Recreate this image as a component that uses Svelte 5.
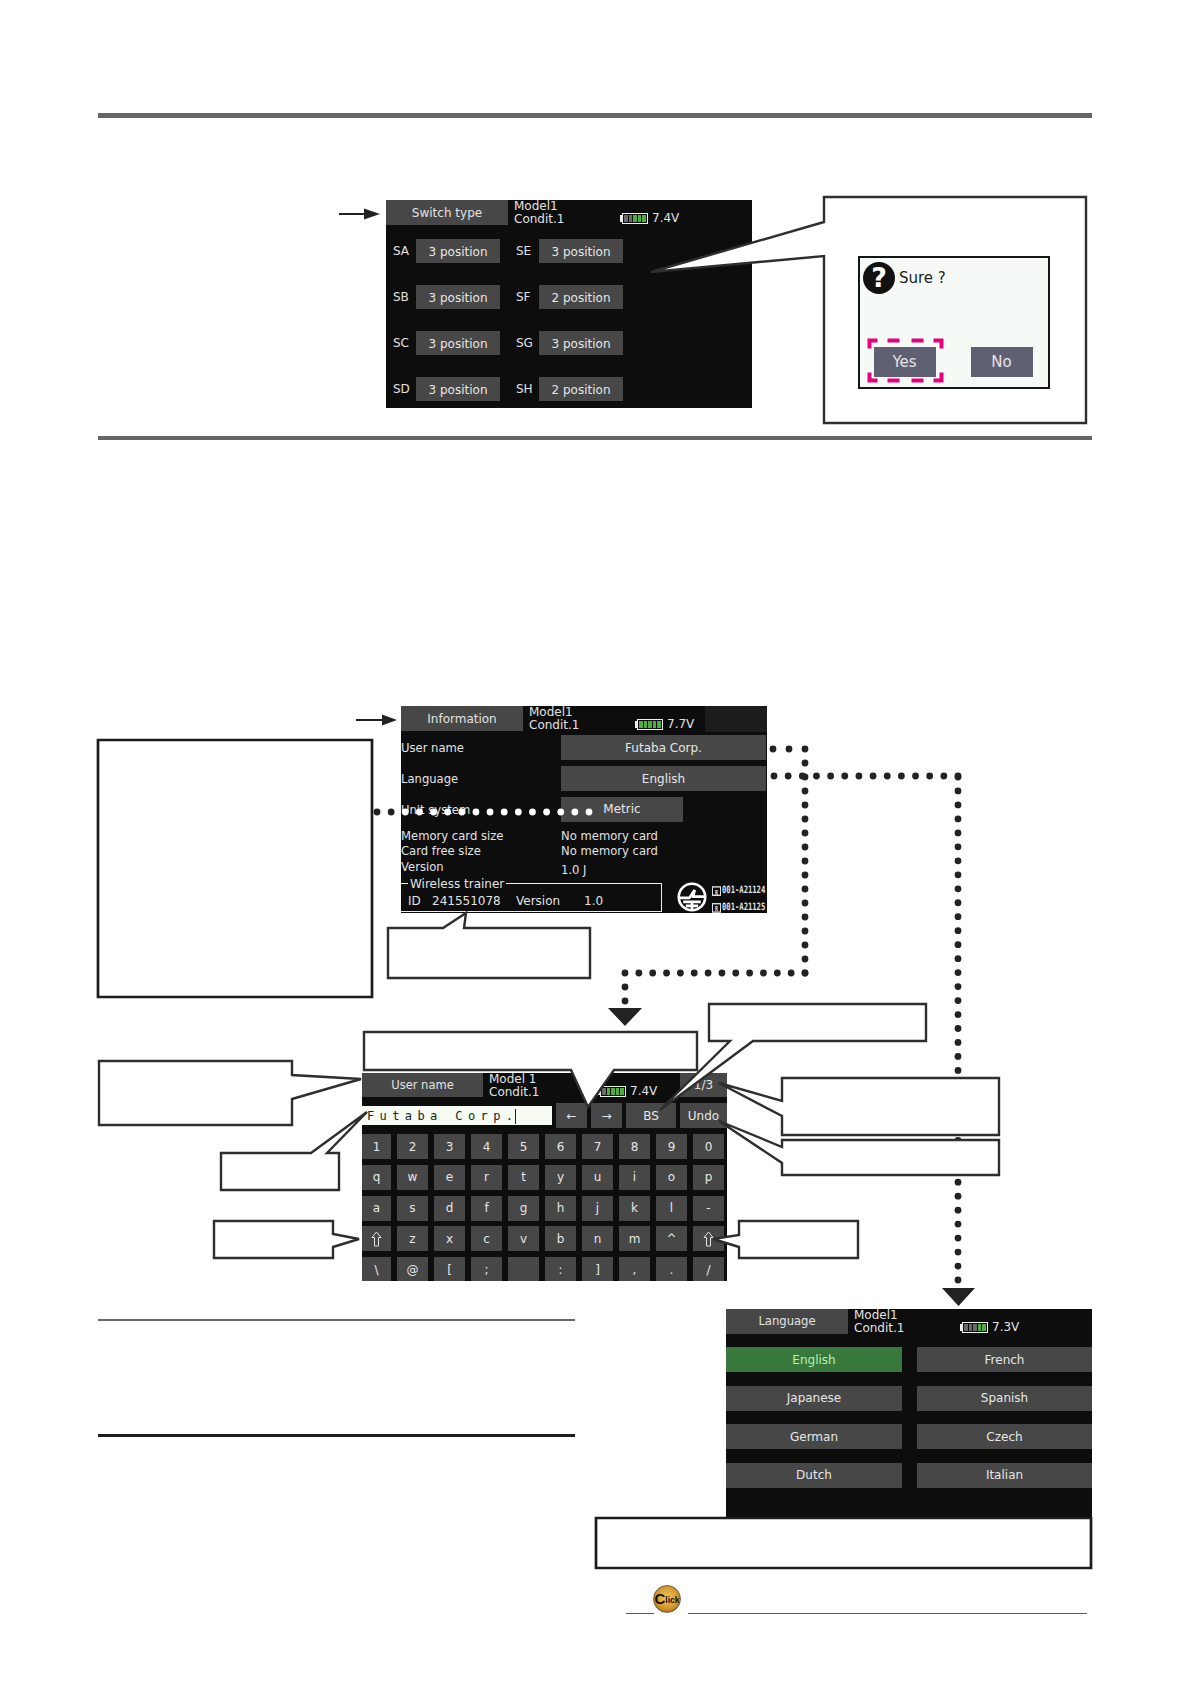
<script>
  const range = (start, end, n) =>
    Array.from({ length: n + 1 }, (_, i) => start + ((end - start) * i) / n);

  // dotted leader lines, [x, y] in page coordinates
  const dots = [
    ...range(377, 589, 15).map((x) => [x, 812]),
    ...[773, 789].map((x) => [x, 749]),
    ...range(774, 958, 13).map((x) => [x, 776]),
    ...range(749, 973, 16).map((y) => [805, y]),
    ...range(625, 805, 13).map((x) => [x, 973]),
    ...[987, 1001].map((y) => [625, y]),
    ...range(777, 1280, 36).map((y) => [958, y]),
  ];

  // the unit system line turns white where it crosses the black screen
  const dotColor = (x, y) => (y === 812 && x > 400 ? "#fff" : "#222");

  const callouts = [
    "824,197 1086,197 1086,423 824,423 824,256 651,272 824,222",
    "388,928 443,928 466,913 464,928 590,928 590,978 388,978",
    "364,1032 697,1032 697,1070 614,1070 588,1107 571,1070 364,1070",
    "709,1004 926,1004 926,1041 753,1041 660,1110 730,1041 709,1041",
    "99,1061 292,1061 292,1075 361,1079 292,1099 292,1125 99,1125",
    "221,1153 311,1153 367,1112 327,1153 339,1153 339,1190 221,1190",
    "214,1221 333,1221 333,1234 359,1239 333,1247 333,1258 214,1258",
    "739,1221 858,1221 858,1258 739,1258 739,1247 713,1239 739,1235",
    "782,1078 999,1078 999,1135 782,1135 782,1116 719,1083 782,1101",
    "782,1140 999,1140 999,1175 782,1175 782,1163 719,1121 782,1147",
  ];

  const heavyBoxes = [
    "98,740 372,740 372,997 98,997",
    "596,1518 1091,1518 1091,1568 596,1568",
  ];

  const switches = [
    ["SA", "3 position", "SE", "3 position"],
    ["SB", "3 position", "SF", "2 position"],
    ["SC", "3 position", "SG", "3 position"],
    ["SD", "3 position", "SH", "2 position"],
  ];

  const keys = [
    ..."1234567890qwertyuiopasdfghjkl-",
    "shift", ..."zxcvbnm^", "shift",
    "\\", "@", "[", ";", "", ":", "]", ",", ".", "/",
  ];

  const languages = ["English", "French", "Japanese", "Spanish", "German", "Czech", "Dutch", "Italian"];
</script>

{#snippet battery(cells)}
  <div class="battery">
    {#each cells as on}
      <i class:on></i>
    {/each}
  </div>
{/snippet}

{#snippet header(title, model, cells, volts)}
  <div class="header">
    <div class="tab">{title}</div>
    <div class="model">{model}<br />Condit.1</div>
    <div class="power">
      {@render battery(cells)}
      <span>{volts}</span>
    </div>
    {#if title === "User name"}
      <div class="page-btn">1/3</div>
    {/if}
    {#if title === "Information"}
      <div class="blank"></div>
    {/if}
  </div>
{/snippet}

<div class="page">
  <section class="top">
    <div class="screen switch">
      {@render header("Switch type", "Model1", [0, 0, 1, 1, 1], "7.4V")}
      <div class="switch-grid">
        {#each switches as row}
          <span>{row[0]}</span>
          <div class="btn">{row[1]}</div>
          <span class="second">{row[2]}</span>
          <div class="btn">{row[3]}</div>
        {/each}
      </div>
    </div>
  </section>

  <div class="screen info">
    {@render header("Information", "Model1", [1, 1, 1, 1, 1], "7.7V")}
    <div class="info-buttons">
      <span>User name</span><div class="btn">Futaba Corp.</div>
      <span>Language</span><div class="btn">English</div>
      <span>Unit system</span><div class="btn metric">Metric</div>
    </div>
    <div class="info-text">
      <span>Memory card size</span><span>No memory card</span>
      <span>Card free size</span><span>No memory card</span>
      <span>Version</span><span class="version">1.0 J</span>
    </div>
    <fieldset>
      <legend>Wireless trainer</legend>
      <span class="id">ID</span><span class="serial">241551078</span><span class="ver">Version</span><span>1.0</span>
    </fieldset>
    <svg class="mark" viewBox="0 0 34 34" fill="none" stroke="#fff" stroke-width="3">
      <circle cx="17" cy="17" r="15" />
      <path d="M2 18H14L20 9L18.5 16.5H32" />
      <path d="M7 22.5H27M17 22.5V32M10 27H24" />
    </svg>
    <div class="cert">
      <div><b>R</b>001-A21124</div>
      <div><b>R</b>001-A21125</div>
    </div>
  </div>

  <div class="screen keyboard">
    {@render header("User name", "Model 1", [0, 1, 1, 1, 1], "7.4V")}
    <div class="entry">
      <div class="input">Futaba Corp.<i></i></div>
      <div class="btn arrow">←</div>
      <div class="btn arrow">→</div>
      <div class="btn bs">BS</div>
      <div class="btn undo">Undo</div>
    </div>
    <div class="keys">
      {#each keys as key}
        <div class="btn">
          {#if key === "shift"}
            <svg width="11" height="16" viewBox="0 0 11 16" fill="none" stroke="#e0e0e0">
              <path d="M5.5 1L10 6.5H7.5V15H3.5V6.5H1Z" />
            </svg>
          {:else}
            {key}
          {/if}
        </div>
      {/each}
    </div>
  </div>

  <div class="screen language">
    {@render header("Language", "Model1", [0, 0, 0, 1, 1], "7.3V")}
    <div class="lang-grid">
      {#each languages as lang, i}
        <div class="btn" class:active={i === 0}>{lang}</div>
      {/each}
    </div>
  </div>

  <div class="rule thin"></div>
  <div class="rule thick"></div>

  <svg class="overlay" width="1190" height="1684">
    {#each dots as [x, y]}
      <circle cx={x} cy={y} r="3.4" fill={dotColor(x, y)} />
    {/each}
    <path d="M339 214H366M356 720H384" stroke="#222" stroke-width="2" />
    <path d="M364 208.5L380 214L364 219.5ZM382 714.5L397 720L382 725.5Z" fill="#222" />
    <path d="M608 1008H642L625 1026ZM942 1288H975L958.5 1306Z" fill="#222" />
    {#each callouts as points}
      <polygon {points} fill="#fff" stroke="#2e2e2e" stroke-width="2.4" />
    {/each}
    {#each heavyBoxes as points}
      <polygon {points} fill="#fff" stroke="#1c1c1c" stroke-width="2.7" />
    {/each}
  </svg>

  <div class="dialog">
    <div class="ask">
      <div class="question">?</div>
      <span>Sure ?</span>
    </div>
    <div class="choices">
      <div>Yes</div>
      <div>No</div>
    </div>
    <svg class="marks" width="100" height="130" fill="none" stroke="#e6007e" stroke-width="4">
      <path d="M9.5 90.5V82.5H17.5M27.5 82.5H39.5M51.5 82.5H63.5M73.5 82.5H81.5V90.5" />
      <path d="M9.5 114.5V122.5H17.5M27.5 122.5H39.5M51.5 122.5H63.5M73.5 122.5H81.5V114.5" />
    </svg>
  </div>

  <div class="link left"></div>
  <div class="link right"></div>
  <div class="click"><b>C</b>lick</div>
</div>

<style>
  :global(body) {
    margin: 0;
    background: #fff;
  }

  .page {
    position: relative;
    width: 1190px;
    height: 1684px;
    overflow: hidden;
    font-family: "DejaVu Sans", sans-serif;
    font-size: 12px;
  }

  .top {
    box-sizing: border-box;
    width: 994px;
    height: 327px;
    margin: 0 0 0 98px;
    position: relative;
    top: 113px;
    padding: 82px 0 0 288px;
    border-top: 5px solid #666;
    border-bottom: 4px solid #666;
  }

  .screen {
    background: #0d0d0d;
    color: #e2e2e2;
    overflow: hidden;
    line-height: 1;
  }

  .btn {
    display: flex;
    align-items: center;
    justify-content: center;
    background: #474747;
    color: #e6e6e6;
  }

  .header {
    display: flex;
    height: 25px;
  }

  .tab {
    flex: none;
    width: 122px;
    display: flex;
    align-items: center;
    justify-content: center;
    background: #474747;
  }

  .model {
    flex: none;
    width: 108px;
    padding-left: 6px;
    line-height: 12.5px;
  }

  .power {
    display: flex;
    align-items: center;
    gap: 4px;
    height: 12px;
    margin-top: 12px;
  }

  .battery {
    display: flex;
    gap: 1px;
    box-sizing: border-box;
    width: 26px;
    height: 11px;
    padding: 1px;
    border: 1px solid #eee;
    position: relative;
  }

  /* terminal nub on the left of the battery */
  .battery::before {
    content: "";
    position: absolute;
    left: -3px;
    top: 1px;
    width: 2px;
    height: 7px;
    background: #eee;
  }

  .battery i {
    flex: 1;
    background: #6a6a6a;
  }

  .battery i.on {
    background: #4caf3c;
  }

  .page-btn {
    position: absolute;
    right: 0;
    top: 0;
    width: 47px;
    height: 24px;
    display: flex;
    align-items: center;
    justify-content: center;
    background: #474747;
  }

  .blank {
    margin-left: auto;
    width: 62px;
    height: 26px;
    background: #1c1c1c;
  }

  /* switch type */
  .switch {
    width: 366px;
    height: 208px;
  }

  .switch-grid {
    display: grid;
    grid-template-columns: 30px 84px 39px 84px;
    grid-auto-rows: 24px;
    row-gap: 22px;
    align-items: center;
    padding-top: 14px;
  }

  .switch-grid span {
    padding-left: 7px;
  }

  .switch-grid .second {
    padding-left: 16px;
  }

  .switch-grid .btn {
    box-sizing: border-box;
    height: 24px;
    padding-top: 1px;
  }

  /* information */
  .info {
    position: absolute;
    left: 401px;
    top: 706px;
    width: 366px;
    height: 207px;
    font-size: 11.6px;
  }

  .info .header {
    height: 26px;
    font-size: 12px;
  }

  .info .tab {
    height: 25px;
  }

  .info-buttons {
    display: grid;
    grid-template-columns: 160px 205px;
    grid-auto-rows: 25px;
    row-gap: 6px;
    align-items: center;
    padding-top: 3px;
  }

  .info-buttons span {
    padding-top: 2px;
  }

  .info-buttons .btn {
    height: 25px;
    font-size: 12px;
  }

  .info-buttons .metric {
    box-sizing: border-box;
    width: 122px;
    padding-bottom: 1px;
  }

  .info-text {
    display: grid;
    grid-template-columns: 160px 205px;
    grid-auto-rows: 15.5px;
    align-items: center;
    margin-top: 7px;
  }

  .version {
    position: relative;
    top: 3px;
  }

  fieldset {
    box-sizing: border-box;
    width: 261px;
    height: 36px;
    margin: 0;
    padding: 3px 0 0;
    border: 1px solid #eee;
    border-left: 0;
    font-size: 12px;
  }

  legend {
    margin-left: 7px;
    padding: 0 2px;
    line-height: 16px;
  }

  fieldset span {
    display: inline-block;
  }

  .id {
    width: 24px;
    margin-left: 7px;
  }

  .serial {
    width: 84px;
  }

  .ver {
    width: 68px;
  }

  .mark {
    position: absolute;
    left: 276px;
    top: 176px;
    width: 30px;
    height: 30px;
  }

  .cert {
    position: absolute;
    left: 311px;
    top: 176px;
    font: bold 7.2px/12.2px "DejaVu Sans Mono", monospace;
    white-space: nowrap;
    transform: scaleY(1.4);
    transform-origin: 0 0;
  }

  .cert b {
    display: inline-block;
    box-sizing: border-box;
    width: 9px;
    height: 7px;
    line-height: 6px;
    margin-right: 1px;
    border: 1px solid #ddd;
    text-align: center;
    font-size: 5px;
    vertical-align: -0.5px;
  }

  /* keyboard */
  .keyboard {
    position: absolute;
    left: 362px;
    top: 1073px;
    width: 365px;
    height: 208px;
  }

  .keyboard .header {
    height: 30px;
  }

  .keyboard .tab {
    width: 121px;
    height: 24px;
    font-size: 11.5px;
    padding-top: 1px;
    box-sizing: border-box;
  }

  .keyboard .model {
    width: 111px;
    padding-left: 6px;
  }

  .entry {
    display: flex;
    align-items: center;
    gap: 4px;
    height: 25px;
  }

  .input {
    box-sizing: border-box;
    width: 190px;
    height: 19px;
    padding: 1px 0 0 5px;
    background: #f6fbf4;
    color: #222;
    font: 12px/19px "DejaVu Sans Mono", monospace;
    letter-spacing: 5.4px;
    white-space: nowrap;
  }

  .input i {
    display: inline-block;
    width: 1px;
    height: 15px;
    margin-left: -4px;
    background: #222;
    vertical-align: middle;
  }

  .arrow {
    width: 31px;
    height: 25px;
  }

  .bs {
    width: 50px;
    height: 25px;
  }

  .undo {
    width: 47px;
    height: 25px;
  }

  .keys {
    display: grid;
    grid-template-columns: 29px repeat(9, 31px);
    grid-auto-rows: 25px;
    column-gap: 6px;
    row-gap: 5.75px;
    padding-top: 6px;
  }

  /* language */
  .language {
    position: absolute;
    left: 726px;
    top: 1309px;
    width: 366px;
    height: 220px;
  }

  .language .tab {
    font-size: 11.6px;
  }

  .lang-grid {
    display: grid;
    grid-template-columns: 176px 175px;
    grid-auto-rows: 25px;
    column-gap: 15px;
    row-gap: 13.5px;
    padding-top: 13px;
  }

  .lang-grid .active {
    background: #38783c;
    color: #b8f0b0;
  }

  .rule {
    position: absolute;
    left: 98px;
    width: 477px;
  }

  .thin {
    top: 1319px;
    height: 2px;
    background: #6a6a6a;
  }

  .thick {
    top: 1434px;
    height: 3px;
    background: #1e1e1e;
  }

  .overlay {
    position: absolute;
    left: 0;
    top: 0;
  }

  /* yes/no dialog inside the callout */
  .dialog {
    position: absolute;
    left: 858px;
    top: 256px;
    box-sizing: border-box;
    width: 192px;
    height: 133px;
    border: 2.5px solid #151515;
    background: #f6faf6;
  }

  .ask {
    display: flex;
    align-items: center;
    gap: 4px;
    margin: 4px 0 0 3px;
    color: #222;
    font-size: 15px;
  }

  .question {
    width: 32px;
    height: 32px;
    border-radius: 50%;
    background: #111;
    color: #fff;
    font: bold 27px/32px "DejaVu Sans", sans-serif;
    text-align: center;
  }

  .choices {
    display: flex;
    gap: 35px;
    margin: 52.5px 0 0 13.5px;
  }

  .choices div {
    width: 62px;
    height: 30px;
    display: flex;
    align-items: center;
    justify-content: center;
    background: #5f6172;
    color: #e4e4e8;
    font-size: 15px;
  }

  .marks {
    position: absolute;
    left: 0;
    top: 0;
  }

  .link {
    position: absolute;
    top: 1613px;
    height: 1px;
    background: #43598c;
  }

  .left {
    left: 626px;
    width: 28px;
  }

  .right {
    left: 688px;
    width: 399px;
  }

  .click {
    position: absolute;
    left: 653px;
    top: 1585px;
    box-sizing: border-box;
    width: 28px;
    height: 28px;
    border-radius: 50%;
    border: 1px solid #6e6450;
    background: radial-gradient(circle at 50% 45%, #f3c75e 0%, #d2952a 58%, #5e3c12 100%);
    color: #111;
    font: bold 8.5px/25px "Liberation Sans", sans-serif;
    text-align: center;
    white-space: nowrap;
    overflow: hidden;
  }

  .click b {
    font-size: 15px;
    vertical-align: -1px;
  }
</style>
